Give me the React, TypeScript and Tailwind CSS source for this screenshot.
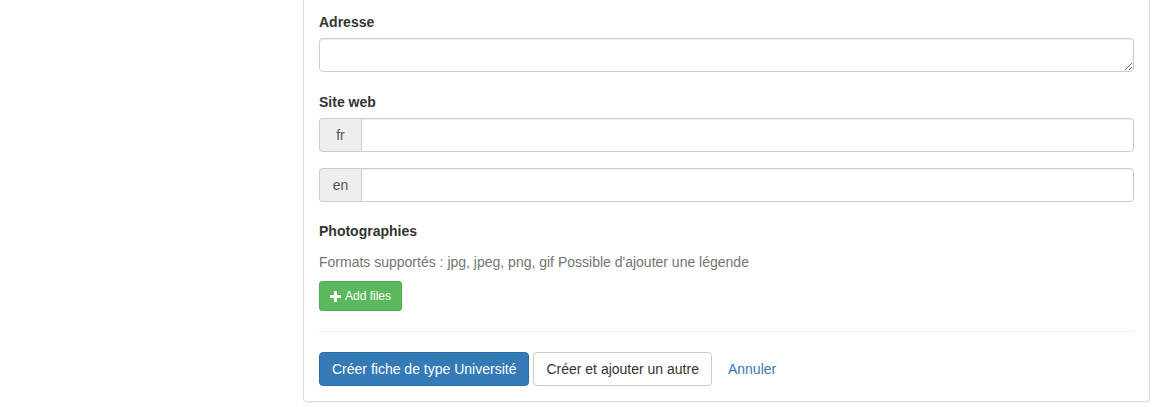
import React from 'react'

function Label({ children, className = '' }: { children: React.ReactNode; className?: string }) {
  return <label className={`block font-bold leading-[20px] ${className}`}>{children}</label>
}

function LangInput({ lang, className = '' }: { lang: string; className?: string }) {
  return (
    <div className={`flex h-[34px] ${className}`}>
      <span className="flex w-[42px] shrink-0 items-center justify-center rounded-l-[4px] border border-r-0 border-[#ccc] bg-[#eee] text-[#555]">
        {lang}
      </span>
      <input
        type="text"
        className="min-w-0 flex-1 rounded-r-[4px] border border-[#ccc] px-3 shadow-[inset_0_1px_1px_rgba(0,0,0,0.075)] outline-none"
      />
    </div>
  )
}

export default function App() {
  return (
    <div className="flex min-h-[407px] bg-white font-['Liberation_Sans',Arial,sans-serif] text-[14px] text-[#333]">
      <div className="w-[303px] shrink-0" />
      <div className="w-[847px] shrink-0 self-start rounded-b-[4px] border-x border-b border-[#ddd] px-[15px] pt-[12px] pb-[15px] shadow-[0_1px_1px_rgba(0,0,0,0.05)]">
        {/* Adresse */}
        <Label className="mb-[6px]">Adresse</Label>
        <textarea className="block h-[34px] w-full resize-y rounded-[4px] border border-[#ccc] px-3 py-[6px] shadow-[inset_0_1px_1px_rgba(0,0,0,0.075)] outline-none" />

        {/* Site web */}
        <Label className="mt-[20px] mb-[6px]">Site web</Label>
        <LangInput lang="fr" />
        <LangInput lang="en" className="mt-4" />

        {/* Photographies */}
        <Label className="mt-[19px]">Photographies</Label>
        <p className="mt-[11px] leading-[20px] text-[#737373]">
          Formats supportés : jpg, jpeg, png, gif Possible d'ajouter une légende
        </p>
        <button className="mt-[9px] flex h-[30px] items-center gap-[4px] rounded-[3px] border border-[#4cae4c] bg-[#5cb85c] px-[10px] text-[12px] text-white">
          <svg width="11" height="11" viewBox="0 0 11 11" className="shrink-0">
            <path d="M4 0h3v4h4v3H7v4H4V7H0V4h4z" fill="white" />
          </svg>
          Add files
        </button>

        <hr className="mt-[20px] mb-[20px] border-t border-[#eee]" />

        <div className="flex items-center gap-[4px]">
          <button className="h-[34px] rounded-[4px] border border-[#2e6da4] bg-[#337ab7] px-3 text-white">
            Créer fiche de type Université
          </button>
          <button className="h-[34px] rounded-[4px] border border-[#ccc] bg-white px-3 text-[#333]">
            Créer et ajouter un autre
          </button>
          <a href="#" className="px-3 text-[#337ab7]">
            Annuler
          </a>
        </div>
      </div>
    </div>
  )
}
